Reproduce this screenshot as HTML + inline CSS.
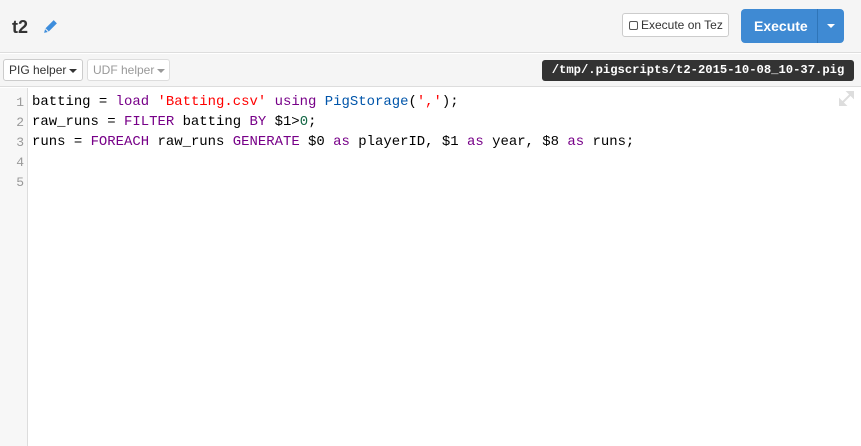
<!DOCTYPE html>
<html><head><style>
*{margin:0;padding:0;box-sizing:border-box}
body{width:861px;height:446px;background:#fff;font-family:"Liberation Sans",sans-serif;position:relative;overflow:hidden}
.hdr{position:absolute;left:0;top:0;width:861px;height:53px;background:#f5f5f5;border-bottom:1px solid #ddd}
.title{position:absolute;left:12px;top:17px;font-size:18px;font-weight:bold;color:#333}
.tb{position:absolute;left:0;top:54px;width:861px;height:33px;background:#f5f5f5;border-bottom:1px solid #ddd}
.btn{position:absolute;top:5px;height:22px;border:1px solid #ccc;border-radius:3px;background:#fff;font-size:12px;line-height:20px;padding:0 0 0 5px;color:#333;white-space:nowrap;overflow:hidden}
.caret{display:inline-block;width:0;height:0;border-left:4px solid transparent;border-right:4px solid transparent;border-top:4px solid #333;vertical-align:middle;margin-left:3px}
.path{position:absolute;left:542px;top:60px;width:312px;height:21px;background:#333;border-radius:3px;color:#fff;font-family:"Liberation Mono",monospace;font-size:12.2px;font-weight:bold;line-height:21px;text-align:center}
.gut{position:absolute;left:0;top:88px;width:28px;height:358px;background:#f7f7f7;border-right:1px solid #ddd}
.ln{position:absolute;left:0;width:24px;text-align:right;font-family:"Liberation Mono",monospace;font-size:13px;color:#999}
.code{position:absolute;left:32px;font-family:"Liberation Mono",monospace;font-size:13.95px;color:#000;white-space:pre}
.k{color:#708}.s{color:#f00}.b{color:#05a}.n{color:#164}
</style></head><body>
<div class="hdr">
<div class="title">t2</div>
<svg style="position:absolute;left:42px;top:18px" width="17" height="17" viewBox="0 0 16 16"><path d="M2 14l1-4 8-8 3 3-8 8z" fill="#3d8ddc"/><path d="M3 10l3 3" stroke="#f5f5f5" stroke-width="1"/></svg>
<div style="position:absolute;left:622px;top:13px;width:107px;height:24px;border:1px solid #ccc;border-radius:3px;background:#fff;font-size:12px;line-height:22px;padding-left:6px;color:#333;white-space:nowrap"><span style="display:inline-block;width:9px;height:9px;border:1px solid #555;border-radius:2px;vertical-align:-1px;margin-right:3px"></span>Execute on Tez</div>
<div style="position:absolute;left:741px;top:9px;width:103px;height:34px;background:#3f8ad3;border-radius:4px;color:#fff;font-size:14px;font-weight:bold"><span style="position:absolute;left:13px;top:9px">Execute</span><div style="position:absolute;left:76px;top:0;width:1px;height:34px;background:#2f75b8"></div><span class="caret" style="position:absolute;left:86px;top:15px;border-top-color:#fff;margin:0"></span></div>
</div>
<div class="tb">
<div class="btn" style="left:3px;width:80px">PIG helper<span class="caret"></span></div>
<div class="btn" style="left:87px;width:83px;color:#999;border-color:#ddd">UDF helper<span class="caret" style="border-top-color:#999"></span></div>
<div class="path" style="top:6px">/tmp/.pigscripts/t2-2015-10-08_10-37.pig</div>
</div>
<div class="gut"></div>
<svg style="position:absolute;left:839px;top:91px" width="15" height="15" viewBox="0 0 15 15"><path d="M9 1h5v5zM1 9v5h5zM12 3l-9 9" stroke="#ddd" fill="#ddd" stroke-width="2"/></svg>
<div class="ln" style="top:95px">1</div><div class="ln" style="top:115px">2</div><div class="ln" style="top:135px">3</div><div class="ln" style="top:155px">4</div><div class="ln" style="top:175px">5</div>
<div class="code" style="top:94px">batting = <span class="k">load</span> <span class="s">'Batting.csv'</span> <span class="k">using</span> <span class="b">PigStorage</span>(<span class="s">','</span>);</div>
<div class="code" style="top:114px">raw_runs = <span class="k">FILTER</span> batting <span class="k">BY</span> $1&gt;<span class="n">0</span>;</div>
<div class="code" style="top:134px">runs = <span class="k">FOREACH</span> raw_runs <span class="k">GENERATE</span> $0 <span class="k">as</span> playerID, $1 <span class="k">as</span> year, $8 <span class="k">as</span> runs;</div>
</body></html>
